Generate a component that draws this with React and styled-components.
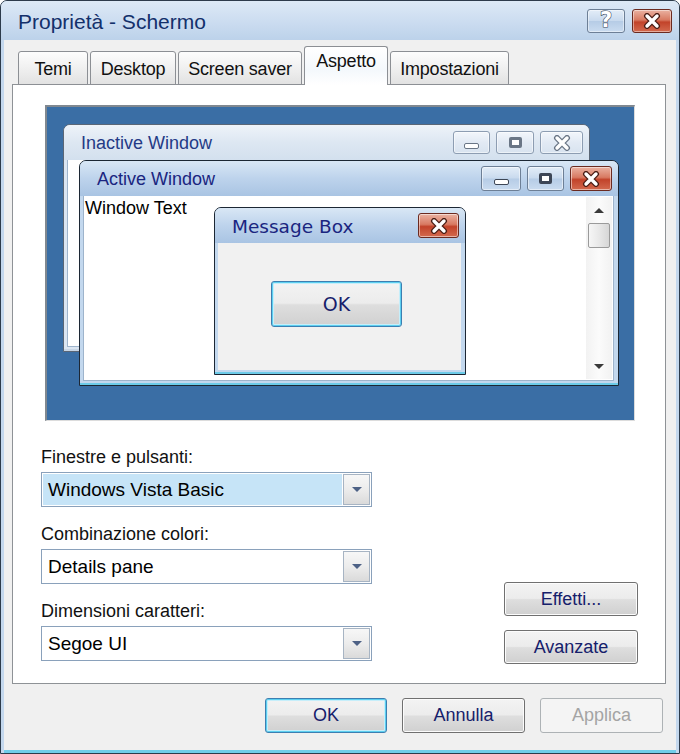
import styled, { createGlobalStyle } from 'styled-components'

const GlobalStyle = createGlobalStyle`
	html, body {
		margin: 0;
		padding: 0;
		background: #ffffff;
	}
	body {
		font-family: "Liberation Sans", Arial, sans-serif;
	}
`

const Dialog = styled.div`
	width: 680px;
	height: 754px;
	box-sizing: border-box;
	display: flex;
	flex-direction: column;
	border: 1px solid #2d3b4b;
	border-radius: 7px 7px 0 0;
	background: #c4d8ee;
	overflow: hidden;
`
const TitleBar = styled.div`
	height: 39px;
	display: flex;
	align-items: center;
	padding: 0 7px 0 17px;
	gap: 7px;
	background: linear-gradient(180deg, #dde9f6 0%, #cbdcf0 55%, #bcd2ea 100%);
`
const Title = styled.div`
	flex: 1;
	font-size: 21px;
	color: #13306b;
	padding-top: 2px;
`
const CaptionButton = styled.div`
	width: ${props => props.$w}px;
	height: 24px;
	box-sizing: border-box;
	border: 1px solid ${props => (props.$red ? '#6b2a20' : '#6d7f96')};
	border-radius: 3px;
	display: flex;
	align-items: center;
	justify-content: center;
	background: ${props =>
		props.$red
			? 'linear-gradient(180deg, #eab2a2 0%, #d87a62 45%, #c2432a 55%, #d36a4f 100%)'
			: 'linear-gradient(180deg, #e3edf8 0%, #c9daee 48%, #b6cce6 52%, #cadcf0 100%)'};
	box-shadow: inset 0 0 0 1px rgba(255, 255, 255, 0.45);
`
const HelpGlyph = styled.span`
	font-family: "DejaVu Sans", sans-serif;
	font-weight: bold;
	font-size: 21px;
	line-height: 1;
	color: #ffffff;
	-webkit-text-stroke: 1.2px #3c4a5c;
	paint-order: stroke fill;
`
const Client = styled.div`
	flex: 1;
	display: flex;
	flex-direction: column;
	margin: 0 3px 0 3px;
	background: #f0f0f0;
	border-bottom: 3px solid #72cde9;
`
const TabsRow = styled.div`
	display: flex;
	align-items: flex-end;
	gap: 2px;
	height: 39px;
	margin-top: 6px;
	padding-left: 14px;
	margin-bottom: -1px;
	position: relative;
	z-index: 1;
`
const Tab = styled.div`
	width: ${props => props.$w}px;
	height: ${props => (props.$active ? 39 : 34)}px;
	box-sizing: border-box;
	padding-top: ${props => (props.$active ? 4 : 3)}px;
	display: flex;
	align-items: ${props => (props.$active ? 'flex-start' : 'center')};
	justify-content: center;
	font-size: 18px;
	letter-spacing: -0.2px;
	color: #111111;
	white-space: nowrap;
	border: 1px solid #8c8f94;
	border-bottom: ${props => (props.$active ? 'none' : '1px solid #8c8f94')};
	border-radius: 3px 3px 0 0;
	background: ${props =>
		props.$active
			? 'linear-gradient(180deg, #ffffff 0%, #f4f8fc 60%, #ffffff 100%)'
			: 'linear-gradient(180deg, #fdfdfd 0%, #f0f0f0 50%, #e2e2e2 100%)'};
`
const Panel = styled.div`
	width: 654px;
	box-sizing: border-box;
	margin-left: 8px;
	background: #ffffff;
	border: 1px solid #8e9296;
	padding-bottom: 22px;
`
const Preview = styled.div`
	position: relative;
	height: 316px;
	box-sizing: border-box;
	margin: 20px 30px 0 32px;
	background: #3a6ea5;
	border-top: 2px solid #808890;
	border-left: 2px solid #808890;
	border-right: 1px solid #dcdcdc;
	border-bottom: 1px solid #dcdcdc;
	overflow: hidden;
`
const MiniWindow = styled.div`
	position: absolute;
	left: ${props => props.$x}px;
	top: ${props => props.$y}px;
	width: ${props => props.$w}px;
	height: ${props => props.$h}px;
	box-sizing: border-box;
	display: flex;
	flex-direction: column;
	border: 1px solid ${props => (props.$inactive ? '#5a6676' : '#1c2734')};
	border-radius: 7px 7px 0 0;
	background: ${props => (props.$inactive ? '#dbe6f2' : '#c3d8ee')};
	box-shadow: inset 0 -2px 0 ${props => (props.$inactive ? '#c8d6e6' : '#6ccbe8')};
	overflow: hidden;
`
const MiniTitle = styled.div`
	height: 35px;
	flex-shrink: 0;
	display: flex;
	align-items: center;
	gap: 6px;
	padding: 0 6px 0 17px;
	background: ${props =>
		props.$inactive
			? 'linear-gradient(180deg, #eef3f9 0%, #dde7f2 50%, #d3e0ee 100%)'
			: 'linear-gradient(180deg, #d9e7f5 0%, #bdd3ec 50%, #a9c4e3 100%)'};
`
const MiniTitleText = styled.div`
	flex: 1;
	font-size: ${props => props.$size || 18}px;
	font-family: ${props => (props.$wide ? '"DejaVu Sans", sans-serif' : 'inherit')};
	color: ${props => (props.$inactive ? '#243a86' : '#1a2580')};
	padding-top: 2px;
`
const MiniButton = styled.div`
	width: ${props => props.$w}px;
	height: ${props => (props.$inactive ? 23 : 25)}px;
	box-sizing: border-box;
	display: flex;
	align-items: center;
	justify-content: center;
	border: 1px solid ${props => (props.$red ? '#6b2a20' : props.$inactive ? '#8d9db2' : '#6d7f96')};
	border-radius: 3px;
	background: ${props =>
		props.$red
			? 'linear-gradient(180deg, #eab2a2 0%, #d87a62 45%, #c2432a 55%, #d36a4f 100%)'
			: props.$inactive
			? 'linear-gradient(180deg, #f2f6fb 0%, #e2eaf4 50%, #d8e3ef 100%)'
			: 'linear-gradient(180deg, #e3edf8 0%, #c9daee 48%, #b6cce6 52%, #cadcf0 100%)'};
	box-shadow: inset 0 0 0 1px rgba(255, 255, 255, 0.5);
`
const MinGlyph = styled.div`
	width: 15px;
	height: 6px;
	box-sizing: border-box;
	margin-top: 7px;
	border: 1px solid ${props => (props.$dim ? '#6a7686' : '#3d4656')};
	border-radius: 2px;
	background: #ffffff;
`
const MaxGlyph = styled.div`
	width: 13px;
	height: 11px;
	box-sizing: border-box;
	border: 3px solid ${props => (props.$dim ? '#6a7686' : '#3d4656')};
	border-radius: 2px;
	background: #ffffff;
`
const WinBody = styled.div`
	flex: 1;
	display: flex;
	margin: 0 4px 4px 3px;
	background: ${props => props.$bg || '#ffffff'};
	border: 1px solid ${props => (props.$plain ? 'transparent' : '#9eb4cc')};
	border-top: none;
`
const WinText = styled.div`
	flex: 1;
	font-size: 18px;
	color: #000000;
	padding: 2px 0 0 1px;
`
const Scrollbar = styled.div`
	width: 26px;
	display: flex;
	flex-direction: column;
	align-items: center;
	background: linear-gradient(90deg, #f2f2f2 0%, #fbfbfb 50%, #f2f2f2 100%);
	margin: 1px 1px 1px 0;
`
const ScrollArrow = styled.div`
	height: 26px;
	display: flex;
	align-items: center;
	justify-content: center;
	&::after {
		content: '';
		width: 0;
		height: 0;
		border-left: 5px solid transparent;
		border-right: 5px solid transparent;
		${props =>
			props.$down ? 'border-top: 5px solid #3a3a3a;' : 'border-bottom: 5px solid #3a3a3a;'}
	}
`
const ScrollThumb = styled.div`
	width: 22px;
	height: 25px;
	box-sizing: border-box;
	border: 1px solid #9a9a9a;
	border-radius: 2px;
	background: linear-gradient(90deg, #f6f6f6 0%, #e8e8e8 50%, #d6d6d6 100%);
`
const ScrollSpace = styled.div`
	flex: 1;
`
const MsgContent = styled.div`
	flex: 1;
	display: flex;
	align-items: flex-start;
	justify-content: center;
	padding-top: 38px;
	padding-right: 6px;
`
const Lower = styled.div`
	display: flex;
	justify-content: space-between;
	align-items: flex-end;
	margin-top: 24px;
	padding: 0 27px 0 28px;
`
const Fields = styled.div`
	width: 331px;
	display: flex;
	flex-direction: column;
	gap: 15px;
`
const Field = styled.div`
	display: flex;
	flex-direction: column;
	gap: 3px;
`
const Label = styled.div`
	font-size: 18px;
	line-height: 24px;
	color: #111111;
`
const Select = styled.div`
	height: 35px;
	box-sizing: border-box;
	display: flex;
	padding: 1px;
	background: #ffffff;
	border: 1px solid #8aa1bb;
`
const SelectValue = styled.div`
	flex: 1;
	font-size: 19px;
	line-height: 31px;
	padding-left: 5px;
	color: #000000;
	background: ${props => (props.$selected ? '#c6e4f7' : 'transparent')};
	margin-right: 1px;
`
const SelectArrow = styled.div`
	width: 27px;
	box-sizing: border-box;
	display: flex;
	align-items: center;
	justify-content: center;
	border: 1px solid #a7b4c3;
	background: linear-gradient(180deg, #f7f7f7 0%, #ececec 50%, #dadada 100%);
	&::after {
		content: '';
		border-left: 5px solid transparent;
		border-right: 5px solid transparent;
		border-top: 5px solid #4d6185;
	}
`
const SideButtons = styled.div`
	width: 134px;
	display: flex;
	flex-direction: column;
	gap: 14px;
	margin-bottom: -3px;
`
const Button = styled.div`
	width: ${props => (props.$w ? `${props.$w}px` : '100%')};
	height: ${props => props.$h || 34}px;
	box-sizing: border-box;
	display: flex;
	align-items: center;
	justify-content: center;
	font-size: ${props => props.$fs || 18}px;
	font-family: ${props => (props.$wide ? '"DejaVu Sans", sans-serif' : 'inherit')};
	color: ${props => (props.$disabled ? '#a4a4a4' : '#16206b')};
	border: 1px solid ${props => (props.$default ? '#3c7fb1' : props.$disabled ? '#adb2b5' : '#707070')};
	border-radius: 3px;
	background: ${props =>
		props.$disabled
			? '#f4f4f4'
			: 'linear-gradient(180deg, #f3f3f3 0%, #ececec 48%, #dedede 52%, #d0d0d0 100%)'};
	box-shadow: ${props =>
		props.$default
			? 'inset 0 0 0 1px #5ccff0, inset 0 0 0 2px #c6eefa'
			: props.$disabled
			? 'none'
			: 'inset 0 0 0 1px #fcfcfc'};
`
const Footer = styled.div`
	display: flex;
	justify-content: flex-end;
	gap: 15px;
	padding: 14px 13px 0 0;
`

function CloseGlyph({ dim }) {
	return (
		<svg width="20" height="16" viewBox="0 0 20 16">
			<path
				d="M5 3 L15 13 M15 3 L5 13"
				stroke={dim ? '#6a7686' : '#4a1e16'}
				strokeWidth="6"
				strokeLinecap="round"
				fill="none"
			/>
			<path
				d="M5 3 L15 13 M15 3 L5 13"
				stroke="#ffffff"
				strokeWidth="3.4"
				strokeLinecap="round"
				fill="none"
			/>
		</svg>
	)
}

const tabs = [
	{ name: 'Temi', width: 70 },
	{ name: 'Desktop', width: 86 },
	{ name: 'Screen saver', width: 124 },
	{ name: 'Aspetto', width: 84, active: true },
	{ name: 'Impostazioni', width: 119 },
]

const fields = [
	{ label: 'Finestre e pulsanti:', value: 'Windows Vista Basic', selected: true },
	{ label: 'Combinazione colori:', value: 'Details pane' },
	{ label: 'Dimensioni caratteri:', value: 'Segoe UI' },
]

export default function App() {
	return (
		<>
			<GlobalStyle />
			<Dialog>
				<TitleBar>
					<Title>Proprietà - Schermo</Title>
					<CaptionButton $w={38}>
						<HelpGlyph>?</HelpGlyph>
					</CaptionButton>
					<CaptionButton $w={40} $red>
						<CloseGlyph />
					</CaptionButton>
				</TitleBar>
				<Client>
					<TabsRow>
						{tabs.map(t => (
							<Tab key={t.name} $w={t.width} $active={t.active}>
								{t.name}
							</Tab>
						))}
					</TabsRow>
					<Panel>
						<Preview>
							<MiniWindow $inactive $x={16} $y={17} $w={527} $h={228}>
								<MiniTitle $inactive>
									<MiniTitleText $inactive>Inactive Window</MiniTitleText>
									<MiniButton $inactive $w={37}>
										<MinGlyph $dim />
									</MiniButton>
									<MiniButton $inactive $w={38}>
										<MaxGlyph $dim />
									</MiniButton>
									<MiniButton $inactive $w={43}>
										<CloseGlyph dim />
									</MiniButton>
								</MiniTitle>
								<WinBody />
							</MiniWindow>
							<MiniWindow $x={32} $y={53} $w={540} $h={226}>
								<MiniTitle>
									<MiniTitleText>Active Window</MiniTitleText>
									<MiniButton $w={40}>
										<MinGlyph />
									</MiniButton>
									<MiniButton $w={37}>
										<MaxGlyph />
									</MiniButton>
									<MiniButton $w={42} $red>
										<CloseGlyph />
									</MiniButton>
								</MiniTitle>
								<WinBody>
									<WinText>Window Text</WinText>
									<Scrollbar>
										<ScrollArrow />
										<ScrollThumb />
										<ScrollSpace />
										<ScrollArrow $down />
									</Scrollbar>
								</WinBody>
							</MiniWindow>
							<MiniWindow $x={167} $y={100} $w={252} $h={168}>
								<MiniTitle>
									<MiniTitleText $wide $size={18.5}>
										Message Box
									</MiniTitleText>
									<MiniButton $w={41} $red>
										<CloseGlyph />
									</MiniButton>
								</MiniTitle>
								<WinBody $bg="#f1f1f1" $plain>
									<MsgContent>
										<Button $default $w={131} $h={46} $wide $fs={19}>
											OK
										</Button>
									</MsgContent>
								</WinBody>
							</MiniWindow>
						</Preview>
						<Lower>
							<Fields>
								{fields.map(f => (
									<Field key={f.label}>
										<Label>{f.label}</Label>
										<Select>
											<SelectValue $selected={f.selected}>{f.value}</SelectValue>
											<SelectArrow />
										</Select>
									</Field>
								))}
							</Fields>
							<SideButtons>
								<Button>Effetti...</Button>
								<Button>Avanzate</Button>
							</SideButtons>
						</Lower>
					</Panel>
					<Footer>
						<Button $default $w={122} $h={35}>
							OK
						</Button>
						<Button $w={123} $h={35}>
							Annulla
						</Button>
						<Button $disabled $w={123} $h={35}>
							Applica
						</Button>
					</Footer>
				</Client>
			</Dialog>
		</>
	)
}
